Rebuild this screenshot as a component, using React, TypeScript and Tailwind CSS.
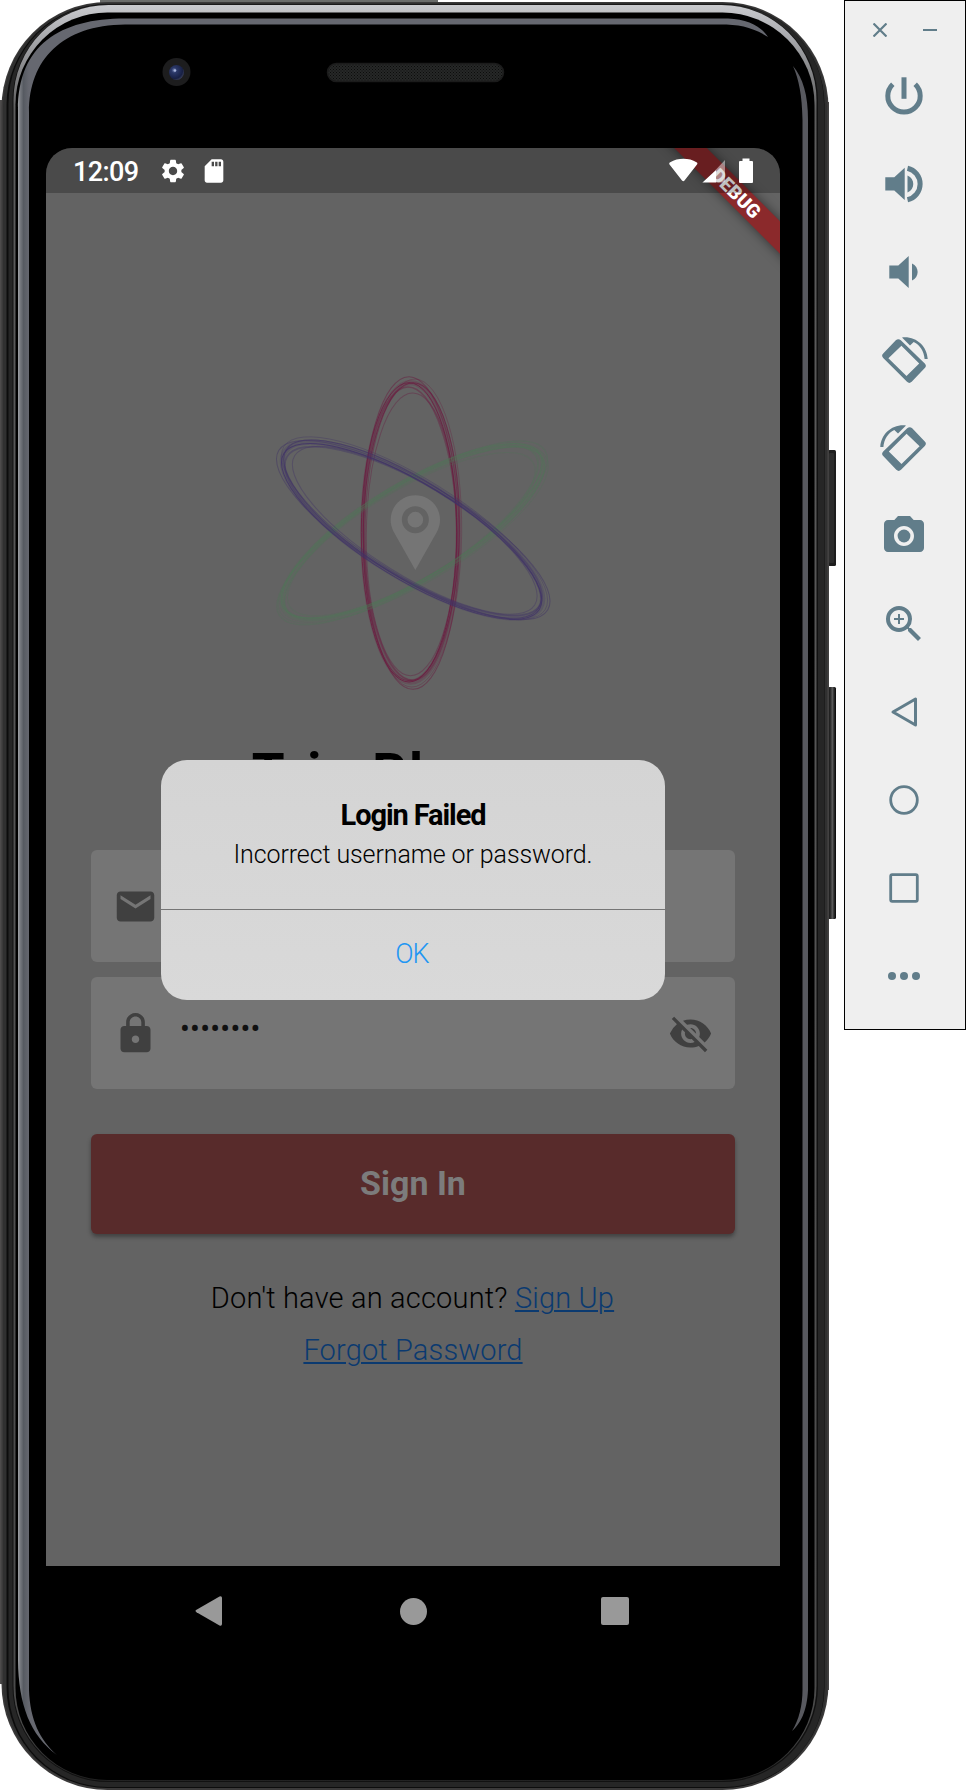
import type { ReactNode } from "react";
import {
  MdCameraAlt,
  MdEmail,
  MdLock,
  MdSdCard,
  MdSettings,
  MdVisibilityOff,
  MdZoomIn,
} from "react-icons/md";

function DeviceFrame() {
  return (
    <svg className="absolute left-0 top-0" width="838" height="1792" viewBox="0 0 838 1792">
      <defs>
        <linearGradient id="rim" x1="0" y1="0" x2="0" y2="1">
          <stop offset="0" stopColor="#c9cace" />
          <stop offset="0.02" stopColor="#a5a6aa" />
          <stop offset="0.06" stopColor="#5c5c5c" />
          <stop offset="0.97" stopColor="#4a4a4a" />
          <stop offset="1" stopColor="#222" />
        </linearGradient>
        <linearGradient id="slate" gradientUnits="userSpaceOnUse" x1="18" y1="0" x2="29" y2="0">
          <stop offset="0" stopColor="#a0a2a6" />
          <stop offset="0.2" stopColor="#777a80" />
          <stop offset="0.5" stopColor="#575b62" />
          <stop offset="1" stopColor="#666870" />
        </linearGradient>
        <linearGradient id="key" x1="0" y1="0" x2="1" y2="0">
          <stop offset="0" stopColor="#111" />
          <stop offset="0.3" stopColor="#2c2c2c" />
          <stop offset="0.55" stopColor="#5c5c5c" />
          <stop offset="0.75" stopColor="#2c2c2c" />
          <stop offset="1" stopColor="#080808" />
        </linearGradient>
        <pattern id="mesh" width="3" height="3" patternUnits="userSpaceOnUse">
          <rect width="3" height="3" fill="#262827" />
          <rect width="1" height="1" fill="#0c0c0c" />
          <rect x="1.5" y="1.5" width="1" height="1" fill="#0c0c0c" />
        </pattern>
        <radialGradient id="lens" cx="0.35" cy="0.35" r="0.7">
          <stop offset="0" stopColor="#8090c0" />
          <stop offset="0.25" stopColor="#2b3868" />
          <stop offset="0.8" stopColor="#182044" />
          <stop offset="1" stopColor="#3a3f58" />
        </radialGradient>
      </defs>
      <rect x="828" y="450" width="8" height="116" rx="1.5" fill="#1e1e1e" />
      <rect x="829" y="453" width="5" height="110" rx="1" fill="#2d2d2d" />
      <rect x="828" y="687" width="8" height="232" rx="1.5" fill="url(#key)" />
      <rect x="0" y="100" width="20" height="1584" fill="#4d4b4b" />
      <rect x="100" y="0" width="338" height="10" fill="#6a6c6a" />
      <rect x="810" y="102" width="19" height="1588" fill="#4b4848" />
      <rect x="1.5" y="2" width="827" height="1788" rx="106" fill="#3b3a3a" />
      <rect x="3" y="3" width="824" height="1785" rx="104" fill="#303030" />
      <rect x="6.5" y="4" width="818" height="1784" rx="101" fill="#0c0c0c" />
      <rect x="8.5" y="4.5" width="815.5" height="1782.5" rx="99" fill="#262626" />
      <rect x="12.5" y="5" width="805.5" height="1777" rx="96" fill="#111" />
      <rect x="13.5" y="5" width="803" height="1776" rx="95" fill="url(#rim)" />
      <rect x="15.5" y="12.5" width="799" height="1767.5" rx="92" fill="#000" />
      <path
        fill="url(#slate)"
        d="M57 1755C30 1735 18.500 1705 18 1660V110C18 45 60 18.500 125 18.500H728C748 19 762 27 768 37C752 27 740 24.500 720 24.500H125C62 25 29 60 29 112V1690C30 1720 40 1740 57 1755Z"
      />
      <path
        fill="#58595f"
        d="M793 66C803 78 808 95 808 120V1690C807 1712 800 1724 792 1731C799 1720 802.500 1705 802.500 1690V120C802 95 799 80 793 66Z"
      />
      <circle cx="176.500" cy="72" r="14" fill="#1d1d1e" />
      <circle cx="176.500" cy="72.500" r="7.500" fill="url(#lens)" />
      <circle cx="175" cy="70.500" r="1.200" fill="#a9b5dc" />
      <rect x="327.500" y="63.500" width="176" height="18" rx="9" fill="url(#mesh)" stroke="#1b1b1b" strokeWidth="1.500" />
    </svg>
  );
}

type OrbitProps = { cx: number; cy: number; angle: number; color: string; strength: number };

const strands = [
  { dx: -4, dy: 0, rx: 143, ry: 449, r: 0, o: 0.85, w: 3 },
  { dx: 3, dy: -2, rx: 144, ry: 447, r: 0.8, o: 0.7, w: 3 },
  { dx: 0, dy: 4, rx: 140, ry: 440, r: -1, o: 0.45, w: 5 },
  { dx: 2, dy: 2, rx: 144, ry: 469, r: -0.8, o: 0.5, w: 3 },
  { dx: 9, dy: 2, rx: 145, ry: 462, r: 0.6, o: 0.4, w: 2.5 },
  { dx: 4, dy: 6, rx: 136, ry: 424, r: 0.5, o: 0.4, w: 3 },
  { dx: 1, dy: 0, rx: 143, ry: 449, r: 0, o: 0.25, w: 16 },
];

function Orbit({ cx, cy, angle, color, strength }: OrbitProps) {
  return (
    <g transform={`translate(${cx} ${cy}) rotate(${angle})`} fill="none" stroke={color} opacity={strength}>
      {strands.map((s, i) => (
        <ellipse
          key={i}
          cx={s.dx}
          cy={s.dy}
          rx={s.rx}
          ry={s.ry}
          strokeWidth={s.w}
          opacity={s.o}
          transform={`rotate(${s.r})`}
        />
      ))}
    </g>
  );
}

function Logo() {
  return (
    <svg className="ml-[194px] mt-[157px] shrink-0" width="340" height="360" viewBox="0 0 1020 1080">
      <Orbit cx={511} cy={547} angle={0} color="#6c1a40" strength={0.95} />
      <Orbit cx={517} cy={546} angle={59} color="#4a7a55" strength={0.6} />
      <Orbit cx={517} cy={541} angle={-58.6} color="#413368" strength={0.95} />
      <path fill="#757575" d="M526 660L461 545A74 74 0 1 1 591 545Z" />
      <circle cx="526" cy="509" r="32" fill="none" stroke="#636363" strokeWidth="17" />
    </svg>
  );
}

function StatusBar() {
  return (
    <div className="relative z-10 flex h-[45px] shrink-0 items-center bg-black/25 pl-[27px] text-white">
      <span className="w-[85.500px] pt-[3px] font-[Roboto] text-[27px] font-medium leading-none tracking-[-0.6px]">12:09</span>
      <MdSettings size={28} />
      <MdSdCard size={28} className="ml-[13px]" />
      <svg className="ml-auto mr-[26.500px]" width="86" height="26" viewBox="0 0 86 26" fill="currentColor">
        <path d="M1.500 6.500Q0.700 5 2.200 4.200C10 -0.300 21 -0.300 28.500 4.200Q30 5 29 6.500L16.500 22.500Q15.300 24 14 22.500Z" />
        <path d="M35 24L48 12V24.500H35Q33.700 24.500 35 24Z" />
        <path opacity="0.45" d="M48 11.500L57 2V23Q57 24.500 55.500 24.500H48Z" />
        <path d="M71.500 3H74.500V0.500H81.500V3H84Q85 3 85 4V24Q85 25 84 25H72Q71 25 71 24V4Q71 3 72 3Z" />
      </svg>
    </div>
  );
}

function DebugBanner() {
  return (
    <div className="absolute left-[595px] top-[34px] flex h-[23px] w-[190px] rotate-45 items-center justify-center bg-[#8b292b] font-[Roboto] text-[19px] font-black leading-none text-white shadow-[0_0_11px_rgba(0,0,0,0.5)]">
      <span>DEBUG</span>
    </div>
  );
}

function LoginForm() {
  return (
    <>
      <h1 className="mt-[38px] h-[48px] text-center text-[53px] font-bold leading-[50px] tracking-[2.6px] text-black">
        Trip Planner
      </h1>
      <div className="mx-[45px] mt-[54px] flex h-[112px] shrink-0 items-center rounded-[6px] bg-[#757575] pl-[22px] text-[#404040]">
        <MdEmail size={45} />
      </div>
      <div className="mx-[45px] mt-[15px] flex h-[112px] shrink-0 items-center rounded-[6px] bg-[#757575] px-[22px] text-[#404040]">
        <MdLock size={45} />
        <span className="mb-[7px] ml-[22px] text-[29px] leading-none tracking-[0.3px] text-[#111]">••••••••</span>
        <MdVisibilityOff size={45} className="ml-auto" />
      </div>
      <div className="mx-[45px] mt-[45px] flex h-[100px] shrink-0 items-center justify-center rounded-[6px] bg-[#582b2b] pb-[2px] text-[34px] font-bold leading-none text-[#7c7c7c] shadow-[0_3px_4px_rgba(0,0,0,0.35)]">
        <span>Sign In</span>
      </div>
      <p className="mt-[50px] whitespace-pre pr-[1px] text-center text-[29px] font-light leading-none tracking-[0.18px] text-black">
        Don't have an account? <a className="text-[#0b3a70] underline decoration-[1.5px] underline-offset-[2px]">Sign Up</a>
      </p>
      <p className="mt-[23px] text-center text-[29px] font-light leading-none tracking-[0.15px]">
        <a className="text-[#0b3a70] underline decoration-[1.5px] underline-offset-[2px]">Forgot Password</a>
      </p>
    </>
  );
}

function LoginFailedDialog() {
  return (
    <div className="absolute left-[115px] top-[612px] z-20 flex h-[239.500px] w-[504px] flex-col rounded-[26px] bg-linear-to-b from-[#d4d4d4] to-[#d9d9d9] text-center text-black">
      <div className="flex h-[150px] flex-col items-center border-b border-[#757575] pt-[41px]">
        <h2 className="text-[29px] font-bold leading-none tracking-[-1.1px]">Login Failed</h2>
        <p className="mt-[12px] whitespace-nowrap text-[25px] font-light leading-none tracking-[-0.1px]">
          Incorrect username or password.
        </p>
      </div>
      <div className="flex flex-1 items-center justify-center pb-[1px] pr-[2px] text-[27px] font-light leading-none tracking-[-0.8px] text-[#2196f3]">
        <span>OK</span>
      </div>
    </div>
  );
}

function NavBar() {
  return (
    <div className="ml-[46px] flex h-[90px] w-[734px] items-center pl-[148px] text-[#999]">
      <svg width="30" height="30" viewBox="0 0 30 30" fill="currentColor">
        <path d="M2.500 13.800L25.500 0.500Q28 -0.300 28 2V28Q28 30.300 25.500 29.500L2.500 16.200Q0.500 15 2.500 13.800Z" />
      </svg>
      <div className="ml-[176px] size-[27px] rounded-full bg-[#999]" />
      <div className="ml-[174px] size-[28px] rounded-[2px] bg-[#999]" />
    </div>
  );
}

function Glyph({ children }: { children: ReactNode }) {
  return (
    <svg width="56" height="56" viewBox="-28 -28 56 56" fill="currentColor">
      {children}
    </svg>
  );
}

function RotateGlyph() {
  return (
    <>
      <path
        fillRule="evenodd"
        d="M-8.200 -19.700Q-5.700 -22 -3.200 -19.700L20.800 3.500Q23 5.800 20.800 8L7.700 21.800Q5.300 24 3 21.800L-20.800 -2Q-23 -4.300 -20.800 -6.500ZM-2.600 -14.200L-15.600 -1.700L2.500 16L15.200 3.400Z"
      />
      <path d="M-2 -22.500C12 -24 23 -14 23.700 -1H20.600C20 -8.500 16 -15 9.700 -18L6 -14.500Z" />
    </>
  );
}

const toolbar: ReactNode[] = [
  <Glyph>
    <path d="M-11.200 -11.800A16.200 16.200 0 1 0 11.200 -11.800" fill="none" stroke="currentColor" strokeWidth="5" />
    <rect x="-2.500" y="-18.700" width="5" height="21.500" />
  </Glyph>,
  <Glyph>
    <path d="M-18.700 -6.800H-9.700L0.700 -16.300V16L-9.700 6.400H-18.700Z" />
    <path d="M3.500 -8.500C11.200 -5.500 11.200 5.500 3.500 8.500Z" />
    <path d="M3.500 -15.800A16.200 16.200 0 0 1 3.500 15.800" fill="none" stroke="currentColor" strokeWidth="5" />
  </Glyph>,
  <Glyph>
    <path d="M-14.700 -6.600H-5.700L4.700 -16V16L-5.700 6.500H-14.700Z" />
    <path d="M8 -8.500C15.500 -5.500 15.500 5.500 8 8.500Z" />
  </Glyph>,
  <Glyph>
    <RotateGlyph />
  </Glyph>,
  <Glyph>
    <g transform="scale(-1 1)">
      <RotateGlyph />
    </g>
  </Glyph>,
  <MdCameraAlt size={48} />,
  <MdZoomIn size={48} />,
  <Glyph>
    <path d="M-11 0L11.500 -13V13Z" fill="none" stroke="currentColor" strokeWidth="3" strokeLinejoin="round" />
  </Glyph>,
  <Glyph>
    <circle r="13.300" fill="none" stroke="currentColor" strokeWidth="2.800" />
  </Glyph>,
  <Glyph>
    <rect x="-13.300" y="-13.300" width="26.600" height="26.600" rx="1.500" fill="none" stroke="currentColor" strokeWidth="2.800" />
  </Glyph>,
  <Glyph>
    <circle cx="-12" r="4" />
    <circle r="4" />
    <circle cx="12" r="4" />
  </Glyph>,
];

function Toolbar() {
  return (
    <div className="ml-[8px] flex h-[1030px] w-[122px] shrink-0 flex-col border border-black bg-[#efefef] text-[#617d8a]">
      <div className="flex h-[51px] items-center pl-[28px] pt-[7px]">
        <svg width="14" height="14" viewBox="0 0 14 14" stroke="currentColor" strokeWidth="2.200">
          <path d="M0.500 0.500L13.500 13.500M13.500 0.500L0.500 13.500" />
        </svg>
        <div className="ml-[36px] h-[2px] w-[14px] bg-[#617d8a]" />
      </div>
      {toolbar.map((icon, i) => (
        <div key={i} className="flex h-[88px] shrink-0 items-center justify-center pr-[2px]">
          {icon}
        </div>
      ))}
    </div>
  );
}

export default function App() {
  return (
    <div className="flex h-[1792px] w-[966px] items-start overflow-hidden bg-white font-[Roboto,sans-serif]">
      <div className="relative h-[1792px] w-[836px] shrink-0 pt-[148px]">
        <DeviceFrame />
        <div className="relative">
          <div className="relative ml-[46px] flex h-[1418px] w-[734px] flex-col overflow-hidden rounded-t-[26px] bg-[#636363]">
            <DebugBanner />
            <StatusBar />
            <Logo />
            <LoginForm />
            <LoginFailedDialog />
          </div>
          <NavBar />
        </div>
      </div>
      <Toolbar />
    </div>
  );
}
